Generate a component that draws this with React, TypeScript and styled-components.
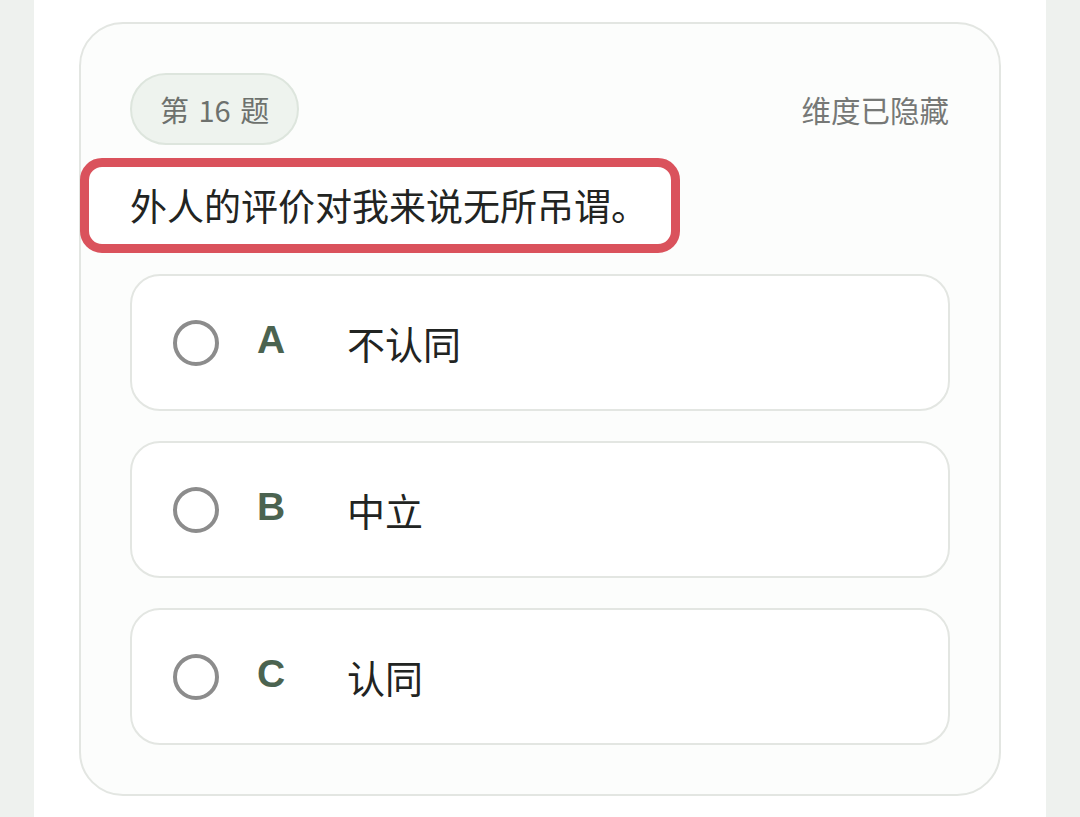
import React from "react";
import styled, { createGlobalStyle } from "styled-components";

const GlobalStyle = createGlobalStyle`
  html, body {
    margin: 0;
    padding: 0;
    background: #eef1ee;
    font-family: "Noto Sans CJK SC", "Noto Sans", sans-serif;
  }
  * { box-sizing: border-box; }
`;

const Page = styled.div`
  display: flex;
  justify-content: center;
  width: 1080px;
  min-height: 817px;
  background: #eef1ee;
`;

const Panel = styled.main`
  width: 1012px;
  min-height: 817px;
  background: #ffffff;
  padding: 22px 45px 0;
`;

const Card = styled.section`
  width: 922px;
  border: 2px solid #e3e6e2;
  border-radius: 44px;
  background: #fcfdfc;
  padding: 49px 49px 49px;
  display: flex;
  flex-direction: column;
`;

const Header = styled.div`
  display: flex;
  align-items: center;
  justify-content: space-between;
  height: 72px;
`;

const Badge = styled.span`
  display: inline-flex;
  align-items: center;
  justify-content: center;
  height: 72px;
  padding: 0 28px;
  border-radius: 36px;
  background: #eef3ee;
  border: 2px solid #dde5dd;
  color: #6d716d;
  font-size: 29px;
  word-spacing: 3px;
  white-space: pre;
`;

const Hint = styled.span`
  color: #767876;
  font-size: 29.5px;
  margin-right: 1px;
`;

const Highlight = styled.div`
  margin-top: 13px;
  margin-left: -50px;
  width: fit-content;
  border: 9px solid #da525c;
  border-radius: 22px;
  background: #ffffff;
  padding: 0 23px 0 41px;
  line-height: 77px;
  font-size: 37px;
  color: #222422;
`;

const Options = styled.div`
  margin-top: 21px;
  display: flex;
  flex-direction: column;
  gap: 30px;
`;

const Option = styled.div`
  display: flex;
  align-items: center;
  height: 137px;
  border: 2px solid #e3e6e2;
  border-radius: 30px;
  background: #ffffff;
  padding-left: 41px;
`;

const Radio = styled.span`
  width: 46px;
  height: 46px;
  border-radius: 50%;
  border: 4px solid #8c8c8c;
  flex-shrink: 0;
`;

const Letter = styled.span`
  width: 90px;
  margin-left: 38px;
  padding-bottom: 6px;
  font-family: "Liberation Sans", Arial, sans-serif;
  font-weight: 700;
  font-size: 39px;
  color: #4b6350;
`;

const Label = styled.span`
  font-size: 38px;
  color: #222422;
`;

const options = [
  { key: "A", text: "不认同" },
  { key: "B", text: "中立" },
  { key: "C", text: "认同" },
];

export default function App() {
  return (
    <>
      <GlobalStyle />
      <Page>
        <Panel>
          <Card>
            <Header>
              <Badge>第 16 题</Badge>
              <Hint>维度已隐藏</Hint>
            </Header>
            <Highlight>外人的评价对我来说无所吊谓。</Highlight>
            <Options>
              {options.map((o) => (
                <Option key={o.key}>
                  <Radio />
                  <Letter>{o.key}</Letter>
                  <Label>{o.text}</Label>
                </Option>
              ))}
            </Options>
          </Card>
        </Panel>
      </Page>
    </>
  );
}
